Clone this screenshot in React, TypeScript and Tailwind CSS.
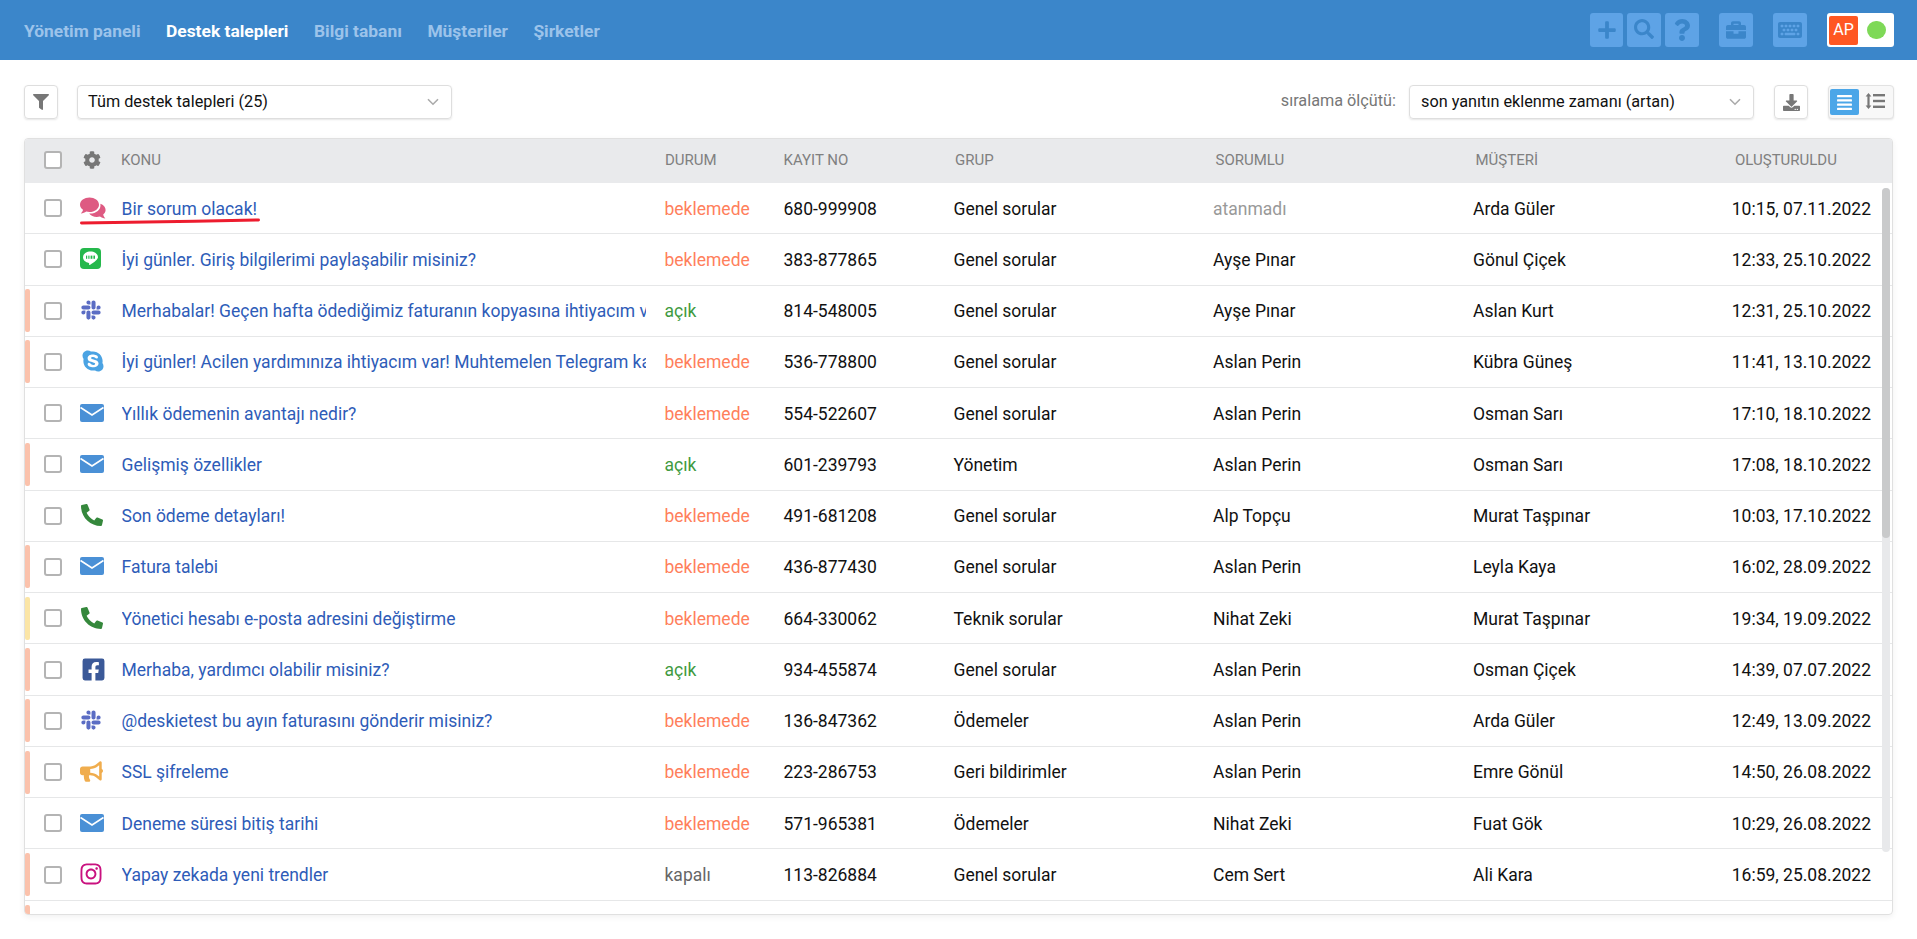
import React from "react";
import {
  FaFilter, FaCog, FaPlus, FaSearch, FaQuestion, FaBriefcase, FaKeyboard, FaDownload,
  FaAlignJustify, FaSlack, FaSkype, FaPhoneAlt, FaFacebookSquare, FaBullhorn, FaInstagram,
} from "react-icons/fa";

const Chevron = () => (
  <svg width="12" height="8" viewBox="0 0 12 8" className="shrink-0">
    <path d="M1 1.2 L6 6.2 L11 1.2" fill="none" stroke="#aaaaaa" strokeWidth="1.6" />
  </svg>
);

const Chat = () => (
  <svg width="26" height="22" viewBox="0 0 26 22">
    <path d="M9.5 0.5C14.6 0.5 19 3.6 19 7.7C19 11.8 14.6 15 9.5 15C8.3 15 7.2 14.8 6.2 14.5C4.8 15.6 3 16.3 0.8 16.4C2 15.2 2.8 14 3 12.7C1.2 11.5 0 9.7 0 7.7C0 3.6 4.4 0.5 9.5 0.5Z" fill="#de5a82" />
    <path d="M20.4 6.8C23.6 8 25.6 10.3 25.6 13C25.6 14.8 24.7 16.4 23.2 17.5C23.4 18.9 24.2 20.2 25.4 21.4C23.2 21.3 21.4 20.6 20 19.5C19 19.8 18 20 16.8 20C13.6 20 10.8 18.7 9.2 16.6C15.6 16.9 21.4 13.2 20.4 6.8Z" fill="#de5a82" />
  </svg>
);

const Line = () => (
  <svg width="21" height="21" viewBox="0 0 21 21">
    <rect width="21" height="21" rx="4" fill="#25b84c" />
    <path d="M10.5 3.5C6.2 3.5 3 6 3 9.3C3 12.2 5.5 14.4 8.8 14.9C9.3 15 9.2 15.6 9.1 16.3C9 16.9 9.6 17.1 10.2 16.7C12 15.6 14.4 14 15.9 12.5C17.1 11.4 18 10.4 18 9.3C18 6 14.8 3.5 10.5 3.5Z" fill="#ffffff" />
    <rect x="6" y="7.6" width="1.2" height="3.2" fill="#25b84c" />
    <rect x="8.3" y="7.6" width="1.2" height="3.2" fill="#25b84c" />
    <rect x="10.6" y="7.6" width="1.8" height="3.2" fill="#25b84c" />
    <rect x="13.4" y="7.6" width="1.6" height="3.2" fill="#25b84c" />
  </svg>
);

const Mail = () => (
  <svg width="24" height="18" viewBox="0 0 24 18">
    <rect width="24" height="18" rx="2" fill="#4a90d6" />
    <path d="M0.5 3.5 L12 11 L23.5 3.5" fill="none" stroke="#ffffff" strokeWidth="1.6" />
  </svg>
);

const SpacingIcon = () => (
  <svg width="20" height="18" viewBox="0 0 20 18">
    <path d="M3.5 1 L6.4 4.6 H4.6 V13.4 H6.4 L3.5 17 L0.6 13.4 H2.4 V4.6 H0.6Z" fill="#777777" />
    <rect x="8" y="2" width="12" height="2.4" fill="#777777" />
    <rect x="8" y="7.8" width="12" height="2.4" fill="#777777" />
    <rect x="8" y="13.6" width="12" height="2.4" fill="#777777" />
  </svg>
);

const icons: Record<string, React.ReactNode> = {
  chat: <Chat />,
  line: <Line />,
  slack: <FaSlack className="text-[#5b6dc4] text-[22px] -ml-[0.5px]" />,
  skype: <FaSkype className="text-[#4ba3e3] text-[24px] ml-[0.5px]" />,
  mail: <Mail />,
  phone: <FaPhoneAlt className="text-[#35883c] text-[22px] ml-[1px]" />,
  fb: <FaFacebookSquare className="text-[#3b5998] text-[25px] ml-[0.5px]" />,
  horn: <FaBullhorn className="text-[#f0ad4e] text-[23px]" />,
  ig: <FaInstagram className="text-[#c9117f] text-[24px] -ml-[1px]" />,
};

type Row = [string, string, string, string, string, string, string, string, string];
const rows: Row[] = [
  ["", "chat", "Bir sorum olacak!", "beklemede", "680-999908", "Genel sorular", "atanmadı", "Arda Güler", "10:15, 07.11.2022"],
  ["", "line", "İyi günler. Giriş bilgilerimi paylaşabilir misiniz?", "beklemede", "383-877865", "Genel sorular", "Ayşe Pınar", "Gönul Çiçek", "12:33, 25.10.2022"],
  ["o", "slack", "Merhabalar! Geçen hafta ödediğimiz faturanın kopyasına ihtiyacım var. Lütfen gönderin", "açık", "814-548005", "Genel sorular", "Ayşe Pınar", "Aslan Kurt", "12:31, 25.10.2022"],
  ["o", "skype", "İyi günler! Acilen yardımınıza ihtiyacım var! Muhtemelen Telegram kanalımız çalışmıyor", "beklemede", "536-778800", "Genel sorular", "Aslan Perin", "Kübra Güneş", "11:41, 13.10.2022"],
  ["", "mail", "Yıllık ödemenin avantajı nedir?", "beklemede", "554-522607", "Genel sorular", "Aslan Perin", "Osman Sarı", "17:10, 18.10.2022"],
  ["o", "mail", "Gelişmiş özellikler", "açık", "601-239793", "Yönetim", "Aslan Perin", "Osman Sarı", "17:08, 18.10.2022"],
  ["", "phone", "Son ödeme detayları!", "beklemede", "491-681208", "Genel sorular", "Alp Topçu", "Murat Taşpınar", "10:03, 17.10.2022"],
  ["o", "mail", "Fatura talebi", "beklemede", "436-877430", "Genel sorular", "Aslan Perin", "Leyla Kaya", "16:02, 28.09.2022"],
  ["y", "phone", "Yönetici hesabı e-posta adresini değiştirme", "beklemede", "664-330062", "Teknik sorular", "Nihat Zeki", "Murat Taşpınar", "19:34, 19.09.2022"],
  ["o", "fb", "Merhaba, yardımcı olabilir misiniz?", "açık", "934-455874", "Genel sorular", "Aslan Perin", "Osman Çiçek", "14:39, 07.07.2022"],
  ["o", "slack", "@deskietest bu ayın faturasını gönderir misiniz?", "beklemede", "136-847362", "Ödemeler", "Aslan Perin", "Arda Güler", "12:49, 13.09.2022"],
  ["o", "horn", "SSL şifreleme", "beklemede", "223-286753", "Geri bildirimler", "Aslan Perin", "Emre Gönül", "14:50, 26.08.2022"],
  ["", "mail", "Deneme süresi bitiş tarihi", "beklemede", "571-965381", "Ödemeler", "Nihat Zeki", "Fuat Gök", "10:29, 26.08.2022"],
  ["o", "ig", "Yapay zekada yeni trendler", "kapalı", "113-826884", "Genel sorular", "Cem Sert", "Ali Kara", "16:59, 25.08.2022"],
];

const stripeClass: Record<string, string> = {
  "": "bg-transparent",
  o: "bg-[#fbc2ac]",
  y: "bg-[#fbe5a6]",
};
const statusClass: Record<string, string> = {
  beklemede: "text-[#ff7f5c]",
  "açık": "text-[#3f9a3f]",
  "kapalı": "text-[#666666]",
};

const Checkbox = () => (
  <div className="w-[18px] h-[18px] shrink-0 border-[2px] border-[#b4b4b4] rounded-[3px] bg-white" />
);

const TopButton = ({ children, className = "" }: { children: React.ReactNode; className?: string }) => (
  <div className={`h-[34px] flex items-center justify-center rounded-[3px] bg-[#5ea3e6] text-[#3b86ca] ${className}`}>
    {children}
  </div>
);

export default function App() {
  return (
    <div className="w-full h-[939px] overflow-hidden bg-white [font-family:Roboto,sans-serif] text-[17.5px] text-[#111111]">
      <header className="h-[60px] bg-[#3b86ca] flex items-center pl-6 pr-[23px]">
        <nav className="flex items-center gap-[25.5px] text-[17.4px] font-bold pt-[2px] text-[#9cc3ea]">
          <span>Yönetim paneli</span>
          <span className="text-white">Destek talepleri</span>
          <span>Bilgi tabanı</span>
          <span>Müşteriler</span>
          <span>Şirketler</span>
        </nav>
        <div className="ml-auto flex items-center">
          <TopButton className="w-[33px] text-[20px]"><FaPlus /></TopButton>
          <TopButton className="w-[34px] ml-[4px] text-[20px] pb-[3px]"><FaSearch /></TopButton>
          <TopButton className="w-[34px] ml-[4px] text-[22px]"><FaQuestion /></TopButton>
          <TopButton className="w-[34px] ml-[20px] text-[20px]"><FaBriefcase /></TopButton>
          <TopButton className="w-[34px] ml-[20px] text-[24px]"><FaKeyboard /></TopButton>
          <div className="w-[67px] h-[34px] ml-[20px] bg-white rounded-[3px] flex items-center pl-[2px]">
            <div className="w-[29px] h-[29px] bg-[#ff5722] text-white text-[16px] rounded-[2px] flex items-center justify-center">AP</div>
            <div className="w-[18.5px] h-[18.5px] ml-[9px] rounded-full bg-[#7ed957]" />
          </div>
        </div>
      </header>

      <div className="flex items-center h-[34px] mt-[25px] ml-6 mr-[23px] text-[16.25px]">
        <div className="w-[34px] h-[34px] border border-[#dedede] rounded-[4px] shadow-[0_1px_2px_rgba(0,0,0,0.1)] flex items-center justify-center text-[#777777] text-[16px]">
          <FaFilter />
        </div>
        <div className="w-[375px] h-[34px] ml-[19px] pl-[10px] pr-[12px] border border-[#dedede] rounded-[4px] shadow-[0_1px_2px_rgba(0,0,0,0.1)] flex items-center justify-between">
          <span>Tüm destek talepleri (25)</span>
          <Chevron />
        </div>
        <span className="ml-auto text-[16.25px] text-[#777777] pb-[2px]">sıralama ölçütü:</span>
        <div className="w-[345px] h-[34px] ml-[13px] pl-[11px] pr-[12px] border border-[#dedede] rounded-[4px] shadow-[0_1px_2px_rgba(0,0,0,0.1)] flex items-center justify-between">
          <span>son yanıtın eklenme zamanı (artan)</span>
          <Chevron />
        </div>
        <div className="w-[34px] h-[34px] ml-[20px] border border-[#dedede] rounded-[4px] shadow-[0_1px_2px_rgba(0,0,0,0.1)] flex items-center justify-center text-[#777777] text-[17px]">
          <FaDownload />
        </div>
        <div className="w-[66px] h-[34px] ml-[20px] border border-[#e2e2e2] bg-[#f8f8f8] rounded-[4px] shadow-[0_1px_2px_rgba(0,0,0,0.1)] flex items-center pl-[1px]">
          <div className="w-[29px] h-[26px] bg-[#4ba6e8] rounded-[2px] flex items-center justify-center text-white text-[17px]">
            <FaAlignJustify />
          </div>
          <div className="ml-[6px] pb-[2px]"><SpacingIcon /></div>
        </div>
      </div>

      <section className="relative mx-6 mt-[19px] h-[777px] border border-[#e0e0e0] rounded-[4px] shadow-[0_2px_6px_rgba(0,0,0,0.06)] overflow-hidden">
        <div className="h-[44px] bg-[#e9eaec] flex items-center text-[15px] text-[#808080] pb-[2px]">
          <div className="ml-[19px]"><Checkbox /></div>
          <FaCog className="ml-[21px] text-[18px] text-[#777777] shrink-0" />
          <div className="ml-[20px] w-[544px] shrink-0">KONU</div>
          <div className="w-[118.5px] shrink-0">DURUM</div>
          <div className="w-[171.5px] shrink-0">KAYIT NO</div>
          <div className="w-[260.5px] shrink-0">GRUP</div>
          <div className="w-[260px] shrink-0">SORUMLU</div>
          <div className="w-[259.5px] shrink-0">MÜŞTERİ</div>
          <div>OLUŞTURULDU</div>
        </div>
        <div className="relative">
          {rows.map((r, i) => (
            <div key={i} className="h-[51.28px] flex items-center border-b border-[#e6e7e8]">
              <div className={`w-[5px] h-[43px] rounded-[2px] shrink-0 ${stripeClass[r[0]]}`} />
              <div className="ml-[14px]"><Checkbox /></div>
              <div className="ml-[18px] w-[41.5px] shrink-0 flex items-center pb-[1px]">{icons[r[1]]}</div>
              <div className="w-[524.5px] mr-[18.5px] pt-[1px] shrink-0 overflow-hidden whitespace-nowrap text-[#2e5cb8]">{r[2]}</div>
              <div className={`w-[119px] pt-[1px] shrink-0 ${statusClass[r[3]]}`}>{r[3]}</div>
              <div className="w-[170px] pt-[1px] shrink-0">{r[4]}</div>
              <div className="w-[259.5px] pt-[1px] shrink-0">{r[5]}</div>
              <div className={`w-[260px] pt-[1px] shrink-0 ${r[6] === "atanmadı" ? "text-[#999999]" : ""}`}>{r[6]}</div>
              <div className="flex-1 pt-[1px] whitespace-nowrap">{r[7]}</div>
              <div className="whitespace-nowrap pt-[1px] pr-[21px]">{r[8]}</div>
            </div>
          ))}
          <div className="h-[51.28px] flex items-center">
            <div className="w-[5px] h-[43px] rounded-[2px] shrink-0 bg-[#fbc2ac]" />
          </div>
          <svg width="180" height="7" viewBox="0 0 180 7" className="absolute left-[55px] top-[35px]">
            <path d="M1.5 5 C50 4.4 120 3.2 178.5 2" fill="none" stroke="#ed1c2e" strokeWidth="3" strokeLinecap="round" />
          </svg>
          <div className="absolute right-[2px] top-[5px] w-2 h-[664px] rounded-[4px] bg-[#e8e9eb]">
            <div className="w-2 h-[350px] rounded-[4px] bg-[#c9cacb]" />
          </div>
        </div>
      </section>
    </div>
  );
}
